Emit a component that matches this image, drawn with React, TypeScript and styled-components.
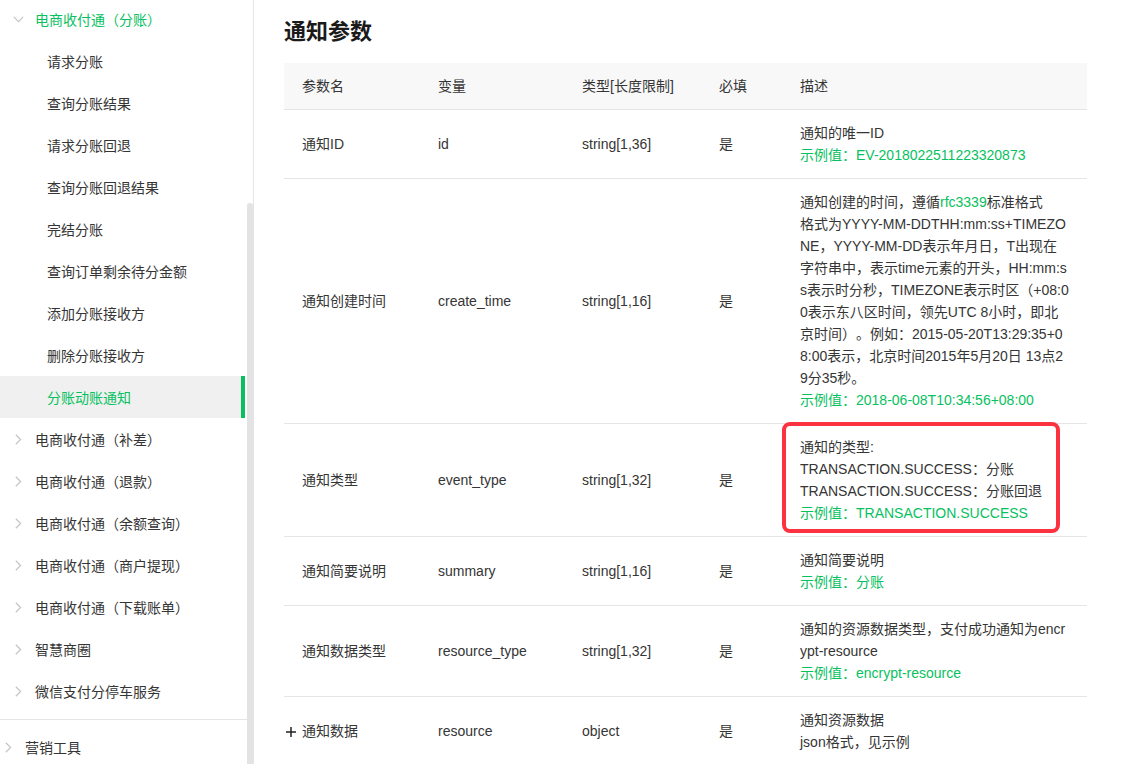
import React from 'react';
import styled, { createGlobalStyle, css } from 'styled-components';

const GlobalStyle = createGlobalStyle`
  html, body { margin: 0; padding: 0; background: #fff; }
  body {
    font-family: "Liberation Sans", "Noto Sans CJK SC", sans-serif;
    color: #353535;
    font-size: 14px;
    text-spacing-trim: space-all;
  }
  * { box-sizing: border-box; }
`;

const GREEN = '#07c160';

const Page = styled.div`
  display: flex;
  height: 764px;
  overflow: hidden;
`;

const Sidebar = styled.aside`
  position: relative;
  width: 254px;
  flex: none;
  border-right: 1px solid #e5e5e5;
  overflow: hidden;
`;

const Nav = styled.ul`
  list-style: none;
  margin: -2px 0 0;
  padding: 0;
  width: 247px;
`;

const Group = styled.li<{ $divider?: boolean }>`
  list-style: none;
  ${(p) =>
    p.$divider &&
    css`
      border-top: 1px solid #e5e5e5;
      padding-top: 6px;
    `}
`;

const GroupList = styled.ul<{ $pad?: boolean }>`
  list-style: none;
  margin: 0;
  padding: 0 0 ${(p) => (p.$pad ? '7px' : '0')};
`;

const Item = styled.div<{ $level: number; $active?: boolean; $open?: boolean }>`
  display: flex;
  align-items: center;
  height: 42px;
  margin-right: 2px;
  padding-left: ${(p) => (p.$level === 0 ? 2 : p.$level === 1 ? 12 : 47)}px;
  font-size: 14px;
  white-space: nowrap;
  color: ${(p) => (p.$active || p.$open ? GREEN : '#353535')};
  background: ${(p) => (p.$active ? '#f0f0f0' : 'transparent')};
  border-right: 4px solid ${(p) => (p.$active ? GREEN : 'transparent')};
`;

const Arrow = styled.span`
  display: inline-flex;
  width: 12px;
  justify-content: center;
  align-items: center;
  margin-right: 11px;
  flex: none;
`;

const Thumb = styled.div`
  position: absolute;
  right: 0;
  top: 203px;
  bottom: 0;
  width: 6px;
  background: #e3e3e3;
  border-radius: 3px 3px 0 0;
`;

const Main = styled.main`
  flex: 1;
  padding-left: 30px;
  overflow: hidden;
`;

const Title = styled.h2`
  margin: 17px 0 16px;
  font-size: 22px;
  line-height: 30px;
  font-weight: 700;
  color: #1a1a1a;
`;

const Table = styled.table`
  width: 803px;
  border-collapse: collapse;
  table-layout: fixed;
`;

const Th = styled.th`
  background: #f8f8f8;
  text-align: left;
  font-weight: 400;
  padding: 12px 18px;
  line-height: 22px;
  color: #353535;
  border-bottom: 1px solid #e5e5e5;
`;

const Td = styled.td<{ $desc?: boolean }>`
  position: relative;
  padding: 12px ${(p) => (p.$desc ? '17.5px' : '18px')} 12px 18px;
  line-height: 22px;
  vertical-align: middle;
  word-break: break-all;
  border-bottom: 1px solid #e5e5e5;
  color: #353535;
`;

const Line = styled.div``;

const Example = styled.div`
  color: ${GREEN};
`;

const Link = styled.span`
  color: ${GREEN};
`;

const Highlight = styled.div`
  position: absolute;
  top: -2px;
  left: 0;
  width: 278px;
  bottom: 3px;
  border: 4px solid #fc3240;
  border-radius: 8px;
  pointer-events: none;
`;

const PlusIcon = styled.svg`
  display: inline-block;
  vertical-align: -1px;
  margin-left: -16px;
  margin-right: 6px;
`;

const ChevronDown = () => (
  <svg width="11" height="7" viewBox="0 0 11 7">
    <path d="M0.8 0.8 L5.5 5.6 L10.2 0.8" fill="none" stroke="#c4c4c4" strokeWidth="1.2" />
  </svg>
);

const ChevronRight = () => (
  <svg width="7" height="11" viewBox="0 0 7 11">
    <path d="M0.8 0.8 L5.6 5.5 L0.8 10.2" fill="none" stroke="#c4c4c4" strokeWidth="1.2" />
  </svg>
);

const children = [
  '请求分账',
  '查询分账结果',
  '请求分账回退',
  '查询分账回退结果',
  '完结分账',
  '查询订单剩余待分金额',
  '添加分账接收方',
  '删除分账接收方',
  '分账动账通知',
];

const collapsed = [
  '电商收付通（补差）',
  '电商收付通（退款）',
  '电商收付通（余额查询）',
  '电商收付通（商户提现）',
  '电商收付通（下载账单）',
  '智慧商圈',
  '微信支付分停车服务',
];

type Row = {
  name: string;
  key: string;
  type: string;
  required: string;
  desc: React.ReactNode[];
  example?: string;
  highlight?: boolean;
  expandable?: boolean;
};

const rows: Row[] = [
  {
    name: '通知ID',
    key: 'id',
    type: 'string[1,36]',
    required: '是',
    desc: ['通知的唯一ID'],
    example: 'EV-2018022511223320873',
  },
  {
    name: '通知创建时间',
    key: 'create_time',
    type: 'string[1,16]',
    required: '是',
    desc: [
      <>
        通知创建的时间，遵循<Link>rfc3339</Link>标准格式
      </>,
      '格式为YYYY-MM-DDTHH:mm:ss+TIMEZONE，YYYY-MM-DD表示年月日，T出现在字符串中，表示time元素的开头，HH:mm:ss表示时分秒，TIMEZONE表示时区（+08:00表示东八区时间，领先UTC 8小时，即北京时间）。例如：2015-05-20T13:29:35+08:00表示，北京时间2015年5月20日 13点29分35秒。',
    ],
    example: '2018-06-08T10:34:56+08:00',
  },
  {
    name: '通知类型',
    key: 'event_type',
    type: 'string[1,32]',
    required: '是',
    desc: ['通知的类型:', 'TRANSACTION.SUCCESS：分账', 'TRANSACTION.SUCCESS：分账回退'],
    example: 'TRANSACTION.SUCCESS',
    highlight: true,
  },
  {
    name: '通知简要说明',
    key: 'summary',
    type: 'string[1,16]',
    required: '是',
    desc: ['通知简要说明'],
    example: '分账',
  },
  {
    name: '通知数据类型',
    key: 'resource_type',
    type: 'string[1,32]',
    required: '是',
    desc: ['通知的资源数据类型，支付成功通知为encrypt-resource'],
    example: 'encrypt-resource',
  },
  {
    name: '通知数据',
    key: 'resource',
    type: 'object',
    required: '是',
    desc: ['通知资源数据', 'json格式，见示例'],
    expandable: true,
  },
];

export default function App() {
  return (
    <>
      <GlobalStyle />
      <Page>
        <Sidebar>
          <Nav>
            <Group>
              <Item $level={1} $open>
                <Arrow>
                  <ChevronDown />
                </Arrow>
                电商收付通（分账）
              </Item>
              <GroupList>
                {children.map((c) => (
                  <li key={c}>
                    <Item $level={2} $active={c === '分账动账通知'}>
                      {c}
                    </Item>
                  </li>
                ))}
              </GroupList>
            </Group>
            <Group>
              <GroupList $pad>
                {collapsed.map((c) => (
                  <li key={c}>
                    <Item $level={1}>
                      <Arrow>
                        <ChevronRight />
                      </Arrow>
                      {c}
                    </Item>
                  </li>
                ))}
              </GroupList>
            </Group>
            <Group $divider>
              <Item $level={0}>
                <Arrow>
                  <ChevronRight />
                </Arrow>
                营销工具
              </Item>
            </Group>
          </Nav>
          <Thumb />
        </Sidebar>
        <Main>
          <Title>通知参数</Title>
          <Table>
            <colgroup>
              <col style={{ width: 136 }} />
              <col style={{ width: 144 }} />
              <col style={{ width: 137 }} />
              <col style={{ width: 81 }} />
              <col style={{ width: 305 }} />
            </colgroup>
            <thead>
              <tr>
                <Th>参数名</Th>
                <Th>变量</Th>
                <Th>类型[长度限制]</Th>
                <Th>必填</Th>
                <Th>描述</Th>
              </tr>
            </thead>
            <tbody>
              {rows.map((r) => (
                <tr key={r.key}>
                  <Td>
                    {r.expandable && (
                      <PlusIcon width="10" height="10" viewBox="0 0 10 10">
                        <path d="M5 0 V10 M0 5 H10" stroke="#222" strokeWidth="1.5" />
                      </PlusIcon>
                    )}
                    {r.name}
                  </Td>
                  <Td>{r.key}</Td>
                  <Td>{r.type}</Td>
                  <Td>{r.required}</Td>
                  <Td $desc>
                    {r.highlight && <Highlight />}
                    {r.desc.map((d, i) => (
                      <Line key={i}>{d}</Line>
                    ))}
                    {r.example && <Example>示例值：{r.example}</Example>}
                  </Td>
                </tr>
              ))}
            </tbody>
          </Table>
        </Main>
      </Page>
    </>
  );
}
